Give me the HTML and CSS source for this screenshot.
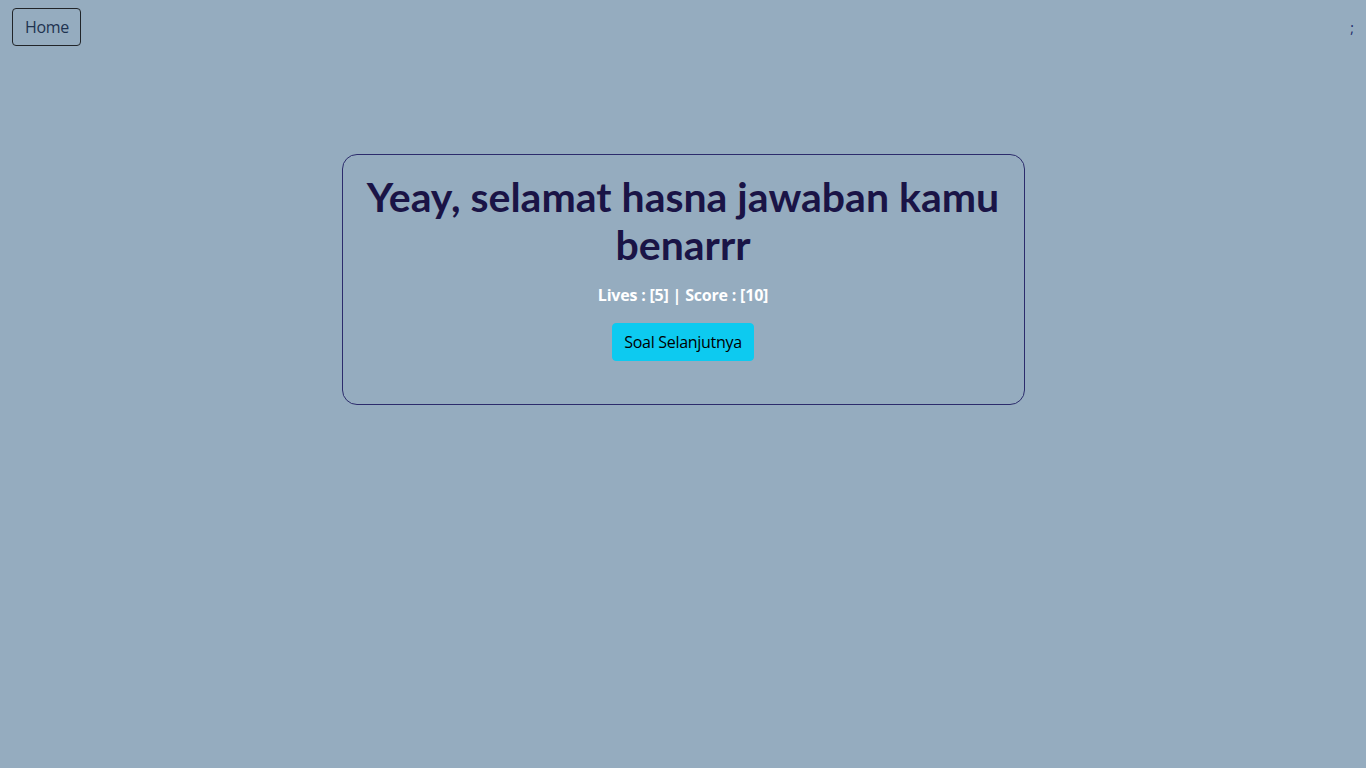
FILE: index.html
```html
<!DOCTYPE html>
<html lang="id">
<head>
<meta charset="utf-8">
<title>Kuis</title>
<link rel="stylesheet" href="styles.css">
</head>
<body>
<nav class="topbar">
  <button class="btn-home">Home</button>
  <span class="semi">;</span>
</nav>
<main class="card">
  <h1 class="title">Yeay, selamat hasna jawaban kamu benarrr</h1>
  <p class="stats">Lives : [5] | Score : [10]</p>
  <button class="btn-next">Soal Selanjutnya</button>
</main>
</body>
</html>
```

FILE: styles.css
```css
* { box-sizing: border-box; }
html, body {
  margin: 0;
  padding: 0;
}
body {
  background: #95acbf;
  font-family: "Open Sans", "Noto Sans", sans-serif;
  font-size: 16px;
  line-height: 1.5;
  color: #212529;
  min-height: 768px;
}
.topbar {
  display: flex;
  justify-content: space-between;
  align-items: center;
  padding: 8px 12px;
}
.btn-home {
  font-family: inherit;
  font-size: 16px;
  line-height: 24px;
  padding: 6px 12px;
  height: 38px;
  width: 69px;
  background: transparent;
  border: 1px solid #212529;
  border-radius: 4px;
  color: #1e3350;
  letter-spacing: -0.3px;
}
.semi {
  font-size: 14px;
  color: #1a2a6a;
  padding-right: 0;
}
.card {
  width: 683px;
  margin: 100px auto 0;
  border: 1px solid #2c2c6c;
  border-radius: 15px;
  padding: 18px 20px 43px;
  text-align: center;
}
.title {
  margin: 0 0 14px;
  font-family: "Lato", "Open Sans", sans-serif;
  font-size: 41px;
  line-height: 48px;
  font-weight: 700;
  color: #1a1446;
}
.stats {
  margin: 0 0 16px;
  font-weight: 700;
  color: #ffffff;
  line-height: 24px;
  letter-spacing: -0.2px;
}
.btn-next {
  font-family: inherit;
  font-size: 16px;
  line-height: 24px;
  height: 38px;
  width: 142px;
  padding: 6px 0;
  background: #0dcaf0;
  border: 1px solid #0dcaf0;
  border-radius: 4px;
  color: #000;
  letter-spacing: -0.3px;
}
```
